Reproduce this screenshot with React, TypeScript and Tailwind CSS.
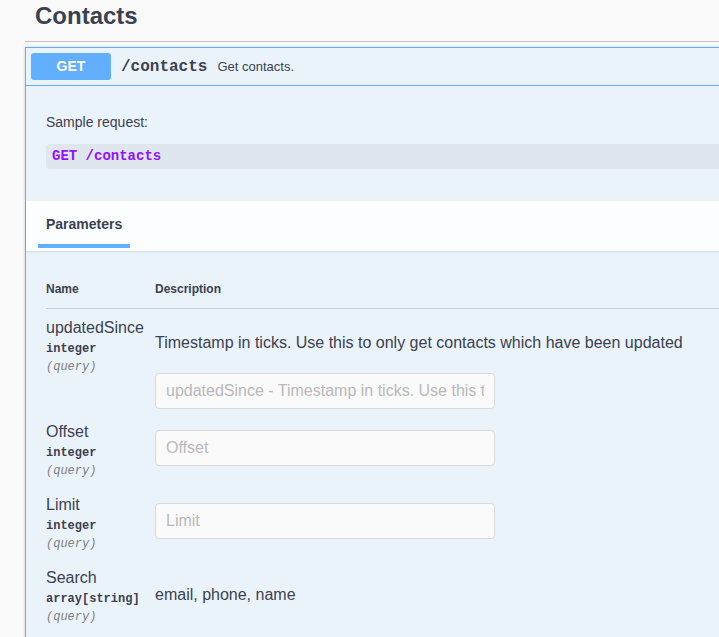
import React from 'react';

// Swagger-style "Contacts" operation block
type Param = {
  name: string;
  type: string;
  description?: string;
  placeholder?: string;
};

const PARAMS: Param[] = [
  {
    name: 'updatedSince',
    type: 'integer',
    description: 'Timestamp in ticks. Use this to only get contacts which have been updated',
    placeholder: 'updatedSince - Timestamp in ticks. Use this to only get contacts which have been updated',
  },
  { name: 'Offset', type: 'integer', placeholder: 'Offset' },
  { name: 'Limit', type: 'integer', placeholder: 'Limit' },
  { name: 'Search', type: 'array[string]', description: 'email, phone, name' },
];

const mono = "font-['Liberation_Mono','Courier_New',monospace]";

function ParamRow({ p }: { p: Param }) {
  // description rows have text above the input, others only the input
  const descPad = p.description ? (p.placeholder ? 'pt-[25px]' : 'pt-[27px]') : 'pt-[17px]';
  const rowPad = p.description && p.placeholder ? 'pb-[4px]' : 'pb-[8px]';

  return (
    <div className={`grid grid-cols-[109px_1fr] ${rowPad}`}>
      <div className="pt-[10px]">
        <div className="text-[16px] leading-[18px] text-[#3b4151]">{p.name}</div>
        <div className={`${mono} pt-[5px] pb-[4px] text-[12px] leading-[14px] font-bold text-[#3b4151]`}>
          {p.type}
        </div>
        <div className={`${mono} text-[12px] leading-[14px] italic text-[#808080]`}>(query)</div>
      </div>
      <div className={descPad}>
        {p.description && (
          <p className="text-[16px] leading-[18px] text-[#3b4151]">{p.description}</p>
        )}
        {p.placeholder && (
          <input
            type="text"
            placeholder={p.placeholder}
            className={`${p.description ? 'mt-[21px]' : ''} block h-[36px] w-full max-w-[340px] rounded-[4px] border border-[#d9d9d9] bg-[#fafafa] px-[10px] text-[16px] text-[#3b4151] outline-none placeholder:text-[#b9b9b9]`}
          />
        )}
      </div>
    </div>
  );
}

export default function App() {
  return (
    <div className="h-screen w-full overflow-hidden bg-[#fafafa] font-['Liberation_Sans',Arial,sans-serif]">
      <div className="ml-[25px] mr-[-80px]">
        {/* tag header */}
        <div className="h-[42px] border-b border-[#c1c3c7] pl-[10px]">
          <h3 className="pt-[2px] text-[24px] leading-[28px] font-bold text-[#3b4151]">Contacts</h3>
        </div>

        {/* operation block */}
        <div className="mt-[5px] border border-[#61affe] bg-[#ebf3fa] pb-[40px] shadow-[0_0_3px_rgba(0,0,0,0.19)]">
          <div className="flex items-center border-b border-[#61affe] p-[5px]">
            <span className="flex h-[27px] w-[80px] items-center justify-center rounded-[3px] bg-[#61affe] text-[14px] font-bold text-white">
              GET
            </span>
            <span className={`${mono} px-[10px] text-[16px] font-bold text-[#3b4151]`}>/contacts</span>
            <span className="text-[13px] text-[#3b4151]">Get contacts.</span>
          </div>

          <div className="px-[20px] pt-[28px] pb-[32px]">
            <p className="text-[14px] leading-[16px] text-[#3b4151]">Sample request:</p>
            <div className="mt-[14px] h-[25px] rounded-[4px] bg-[#dfe6ed] pl-[6px] pt-[5px]">
              <code className={`${mono} block text-[14px] leading-[15px] font-bold text-[#9012fe]`}>
                GET /contacts
              </code>
            </div>
          </div>

          {/* section header */}
          <div className="h-[50px] bg-white/80 pl-[12px] shadow-[0_1px_2px_rgba(0,0,0,0.1)]">
            <div className="inline-flex flex-col">
              <h4 className="px-[8px] pt-[15px] text-[14px] leading-[17px] font-bold text-[#3b4151]">
                Parameters
              </h4>
              <div className="mt-[11px] h-[4px] bg-[#61affe]" />
            </div>
          </div>

          {/* parameter table */}
          <div className="px-[20px] pt-[31px]">
            <div className="grid grid-cols-[109px_1fr] border-b border-[#c8cfd8] pb-[12px] text-[12px] leading-[14px] font-bold text-[#3b4151]">
              <div>Name</div>
              <div>Description</div>
            </div>
            {PARAMS.map((p) => (
              <ParamRow key={p.name} p={p} />
            ))}
          </div>
        </div>
      </div>
    </div>
  );
}
